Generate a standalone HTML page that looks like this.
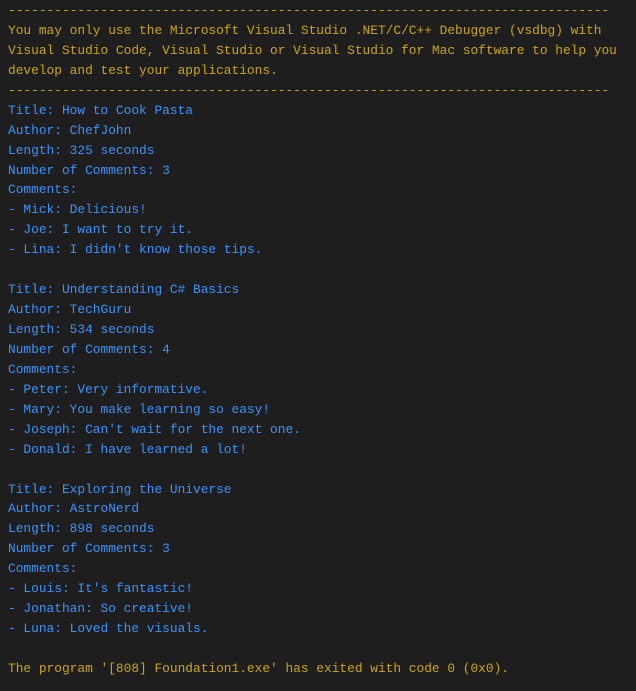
<!DOCTYPE html>
<html><head><style>
html,body{margin:0;padding:0;background:#1e1e1e;width:636px;height:691px;overflow:hidden}
pre{margin:0;padding:0 0 0 8px;font-family:"Liberation Mono",monospace;font-size:12.85px;line-height:19.94px;white-space:pre;padding-top:1px}
.o{color:#cca700}.b{color:#3794ff}
</style></head><body><pre><span class="o">------------------------------------------------------------------------------
You may only use the Microsoft Visual Studio .NET/C/C++ Debugger (vsdbg) with
Visual Studio Code, Visual Studio or Visual Studio for Mac software to help you
develop and test your applications.
------------------------------------------------------------------------------</span>
<span class="b">Title: How to Cook Pasta
Author: ChefJohn
Length: 325 seconds
Number of Comments: 3
Comments:
- Mick: Delicious!
- Joe: I want to try it.
- Lina: I didn't know those tips.

Title: Understanding C# Basics
Author: TechGuru
Length: 534 seconds
Number of Comments: 4
Comments:
- Peter: Very informative.
- Mary: You make learning so easy!
- Joseph: Can't wait for the next one.
- Donald: I have learned a lot!

Title: Exploring the Universe
Author: AstroNerd
Length: 898 seconds
Number of Comments: 3
Comments:
- Louis: It's fantastic!
- Jonathan: So creative!
- Luna: Loved the visuals.</span>

<span class="o">The program '[808] Foundation1.exe' has exited with code 0 (0x0).</span>
</pre></body></html>
